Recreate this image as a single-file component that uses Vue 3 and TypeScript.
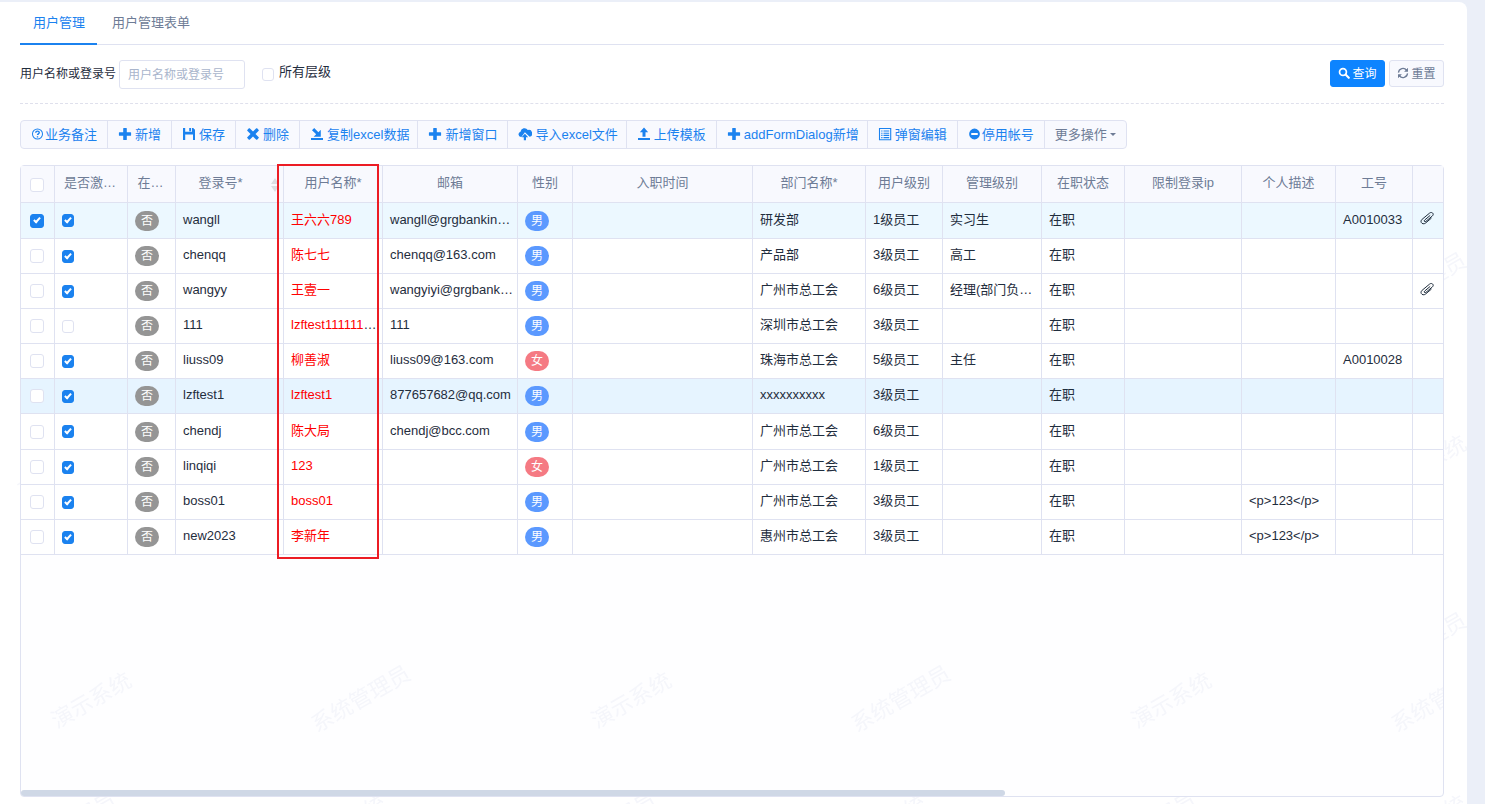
<script setup lang="ts">
import { ref } from 'vue'

interface Shape { d: string; kind: 'fill' | 'line' | 'thin' | 'cut' }
interface Tool { label: string; icon: string; slim?: boolean; tight?: boolean }
interface User {
  picked: boolean
  active: boolean
  login: string
  name: string
  cut?: boolean
  mail: string
  sex: '男' | '女'
  dept: string
  level: string
  manage: string
  note: string
  code: string
  clip: boolean
}

const icons: Record<string, Shape[]> = {
  help: [
    { kind: 'thin', d: 'M7 1.6a5.4 5.4 0 1 0 0 10.8a5.4 5.4 0 1 0 0-10.8z' },
    { kind: 'line', d: 'M5.1 5.7c0-2.4 3.8-2.3 3.8-.2c0 1.4-1.9 1.2-1.9 2.7M7 9.3v1.5' },
  ],
  plus: [{ kind: 'fill', d: 'M5.2 1.4q0-.5.5-.5h2.6q.5 0 .5.5v3.8h3.8q.5 0 .5.5v2.6q0 .5-.5.5H8.800v3.800q0 .5-.5.5H5.700q-.5 0-.5-.5V8.800H1.400q-.5 0-.5-.5V5.700q0-.5.5-.5h3.800z' }],
  save: [{ kind: 'fill', d: 'M1 1h2.200v4.300h6.800V1h1.200L13 2.800V13h-2V7.500H3.200V13H1zM7.200 1h1.900v3.200H7.200zM3.200 4.800h6.800v2.700H3.200z' }],
  remove: [{ kind: 'fill', d: 'M3.700 1.300L7 4.500l3.300-3.200q.4-.3.800 0l1.600 1.600q.3.400 0 .8L9.500 7l3.200 3.300q.3.400 0 .8l-1.600 1.600q-.4.300-.8 0L7 9.500l-3.300 3.200q-.4.300-.8 0l-1.600-1.600q-.3-.4 0-.8L4.500 7L1.300 3.700q-.3-.4 0-.8l1.600-1.600q.4-.3.800 0z' }],
  copy: [{ kind: 'fill', d: 'M1 11h12v2H1zM2 3.200L4.200 1l4.200 4.200L10.800 2.800V9.800H3.600L6.200 7.300z' }],
  cloud: [
    { kind: 'fill', d: 'M3 10a2.700 2.700 0 0 1-.5-5.300A4 4 0 0 1 9.800 3A3.400 3.400 0 0 1 11.600 9.800L6.900 5.200L3.400 9.900z' },
    { kind: 'fill', d: 'M6.900 6.800l3.300 3.400H8v3.100H5.800v-3.100H3.600z' },
  ],
  upload: [{ kind: 'fill', d: 'M1 11h12v2H1zM7 .6l4.200 4.600H8.500v4.600h-3V5.200H2.800z' }],
  list: [
    { kind: 'thin', d: 'M1.500 1.500h11.200v11.200H1.500z' },
    { kind: 'thin', d: 'M3.200 4h1.300M5.500 4h5.700M3.200 6.200h1.300M5.500 6.200h5.700M3.200 8.400h1.300M5.500 8.400h5.700M3.200 10.600h1.300M5.500 10.600h5.700' },
  ],
  minus: [
    { kind: 'fill', d: 'M7 1.200a5.800 5.800 0 1 0 0 11.600a5.800 5.800 0 1 0 0-11.600z' },
    { kind: 'cut', d: 'M3.500 6h7v2.200h-7z' },
  ],
}

const tabs = ['用户管理', '用户管理表单']
const tools: Tool[] = [
  { label: '业务备注', icon: 'help', slim: true },
  { label: '新增', icon: 'plus' },
  { label: '保存', icon: 'save' },
  { label: '删除', icon: 'remove' },
  { label: '复制excel数据', icon: 'copy', tight: true },
  { label: '新增窗口', icon: 'plus' },
  { label: '导入excel文件', icon: 'cloud', tight: true },
  { label: '上传模板', icon: 'upload' },
  { label: 'addFormDialog新增', icon: 'plus', tight: true },
  { label: '弹窗编辑', icon: 'list' },
  { label: '停用帐号', icon: 'minus', slim: true },
]
const headers = ['是否激…', '在…', '登录号*', '用户名称*', '邮箱', '性别', '入职时间', '部门名称*', '用户级别', '管理级别', '在职状态', '限制登录ip', '个人描述', '工号', '']

const gz = '广州市总工会'
const users = ref<User[]>([
  { picked: true, active: true, login: 'wangll', name: '王六六789', mail: 'wangll@grgbankin…', sex: '男', dept: '研发部', level: '1级员工', manage: '实习生', note: '', code: 'A0010033', clip: true },
  { picked: false, active: true, login: 'chenqq', name: '陈七七', mail: 'chenqq@163.com', sex: '男', dept: '产品部', level: '3级员工', manage: '高工', note: '', code: '', clip: false },
  { picked: false, active: true, login: 'wangyy', name: '王壹一', mail: 'wangyiyi@grgbank…', sex: '男', dept: gz, level: '6级员工', manage: '经理(部门负…', note: '', code: '', clip: true },
  { picked: false, active: false, login: '111', name: 'lzftest111111', cut: true, mail: '111', sex: '男', dept: '深圳市总工会', level: '3级员工', manage: '', note: '', code: '', clip: false },
  { picked: false, active: true, login: 'liuss09', name: '柳善淑', mail: 'liuss09@163.com', sex: '女', dept: '珠海市总工会', level: '5级员工', manage: '主任', note: '', code: 'A0010028', clip: false },
  { picked: false, active: true, login: 'lzftest1', name: 'lzftest1', mail: '877657682@qq.com', sex: '男', dept: 'xxxxxxxxxx', level: '3级员工', manage: '', note: '', code: '', clip: false },
  { picked: false, active: true, login: 'chendj', name: '陈大局', mail: 'chendj@bcc.com', sex: '男', dept: gz, level: '6级员工', manage: '', note: '', code: '', clip: false },
  { picked: false, active: true, login: 'linqiqi', name: '123', mail: '', sex: '女', dept: gz, level: '1级员工', manage: '', note: '', code: '', clip: false },
  { picked: false, active: true, login: 'boss01', name: 'boss01', mail: '', sex: '男', dept: gz, level: '3级员工', manage: '', note: '<p>123</p>', code: '', clip: false },
  { picked: false, active: true, login: 'new2023', name: '李新年', mail: '', sex: '男', dept: '惠州市总工会', level: '3级员工', manage: '', note: '<p>123</p>', code: '', clip: false },
])
const keyword = ref('')
const allLevels = ref(false)
const hovered = 5
</script>

<template>
  <main class="card">
    <svg class="mark" aria-hidden="true">
      <defs>
        <pattern id="page-mark" width="540" height="360" patternUnits="userSpaceOnUse">
          <text class="mark-text" transform="translate(293 318) rotate(-30)">系统管理员</text>
          <text class="mark-text" transform="translate(23 138) rotate(-30)">系统管理员</text>
          <text class="mark-text" transform="translate(42 310) rotate(-30)">演示系统</text>
          <text class="mark-text" transform="translate(312 130) rotate(-30)">演示系统</text>
        </pattern>
      </defs>
      <rect y="240" width="100%" height="100%" fill="url(#page-mark)" />
    </svg>

    <nav class="tabs">
      <a v-for="(t, i) in tabs" :key="t" href="#" class="tab" :class="{ on: i === 0 }">{{ t }}</a>
    </nav>

    <form class="search" @submit.prevent>
      <label class="search-label" for="kw">用户名称或登录号</label>
      <input id="kw" v-model="keyword" class="field" type="text" placeholder="用户名称或登录号" />
      <input id="all" v-model="allLevels" class="check search-check" type="checkbox" />
      <label class="all-label" for="all">所有层级</label>
      <div class="actions">
        <button class="btn primary" type="submit">
          <svg class="ico" viewBox="0 0 14 14" aria-hidden="true">
            <circle cx="5.800" cy="5.800" r="4" fill="none" stroke="currentColor" stroke-width="2" />
            <path d="M8.800 8.800L12.600 12.600" stroke="currentColor" stroke-width="2.400" stroke-linecap="round" />
          </svg>查询
        </button>
        <button class="btn" type="reset">
          <svg class="ico" viewBox="0 0 14 14" aria-hidden="true">
            <path d="M1.700 6.500A5.300 5.300 0 0 1 11.200 3.800M12.300 7.500A5.300 5.300 0 0 1 2.800 10.200" fill="none" stroke="currentColor" stroke-width="1.500" />
            <path d="M12.800 1v4.500H8.300zM1.200 13V8.500h4.500z" fill="currentColor" />
          </svg>重置
        </button>
      </div>
    </form>

    <div class="toolbar">
      <button v-for="t in tools" :key="t.label" type="button" class="tool" :class="{ tight: t.tight }">
        <svg class="tool-ico" :class="{ slim: t.slim }" viewBox="0 0 14 14" aria-hidden="true">
          <path v-for="(s, i) in icons[t.icon]" :key="i" :class="s.kind" :d="s.d" />
        </svg>{{ t.label }}
      </button>
      <button type="button" class="tool more">更多操作<i class="caret"></i></button>
    </div>

    <section class="grid">
      <svg class="mark" aria-hidden="true">
        <defs>
          <pattern id="grid-mark" y="389" width="540" height="240" patternUnits="userSpaceOnUse">
            <text class="mark-text" transform="translate(36 174) rotate(-30)">演示系统</text>
            <text class="mark-text" transform="translate(296 178) rotate(-30)">系统管理员</text>
          </pattern>
        </defs>
        <rect y="389" width="100%" height="240" fill="url(#grid-mark)" />
      </svg>
      <table>
        <colgroup>
          <col class="c34" /><col class="c73" /><col class="c48" /><col class="c108" /><col class="c99" />
          <col class="c135" /><col class="c55" /><col class="c180" /><col class="c113" /><col class="c77" />
          <col class="c99" /><col class="c83" /><col class="c117" /><col class="c94" /><col class="c77" /><col />
        </colgroup>
        <thead>
          <tr>
            <th class="pick"><input class="check big" type="checkbox" aria-label="全选" /></th>
            <th v-for="(h, i) in headers" :key="i" :class="{ sortable: i === 2, clipped: i < 2 }">
              {{ h }}
              <svg v-if="i === 2" class="sort" viewBox="0 0 8 14" aria-hidden="true">
                <path d="M4 0l4 6H0zM4 14l4-6H0z" fill="#dcdde2" />
              </svg>
            </th>
          </tr>
        </thead>
        <tbody>
          <tr v-for="(u, i) in users" :key="u.login" :class="{ picked: u.picked, hovered: i === hovered }">
            <td class="pick"><input v-model="u.picked" class="check big" type="checkbox" :aria-label="u.login" /></td>
            <td class="ctl"><input v-model="u.active" class="check" type="checkbox" aria-label="是否激活" /></td>
            <td class="ctl"><span class="tag">否</span></td>
            <td>{{ u.login }}</td>
            <td><span class="name">{{ u.name }}</span><template v-if="u.cut">…</template></td>
            <td>{{ u.mail }}</td>
            <td class="ctl"><span class="tag" :class="u.sex === '男' ? 'male' : 'female'">{{ u.sex }}</span></td>
            <td></td>
            <td>{{ u.dept }}</td>
            <td>{{ u.level }}</td>
            <td>{{ u.manage }}</td>
            <td>在职</td>
            <td></td>
            <td>{{ u.note }}</td>
            <td>{{ u.code }}</td>
            <td class="files">
              <svg v-if="u.clip" class="clip" viewBox="0 0 14 14" aria-hidden="true">
                <path d="M10.200 4.400L4.700 9c-1.200 1.100.1 2.300 1.200 1.400l6.500-5.500c2.200-2-.6-4.600-2.800-2.800L2.100 8.300c-2.900 2.600.6 6.100 3.500 3.700l5.900-5" />
              </svg>
            </td>
          </tr>
        </tbody>
      </table>
      <div class="thumb"></div>
      <div class="frame"></div>
    </section>
  </main>
</template>

<style>
body {
  margin: 0;
  background: #ebeff8;
}
</style>

<style scoped>
.card {
  position: relative;
  box-sizing: border-box;
  display: flex;
  flex-direction: column;
  min-height: calc(100vh - 2px);
  margin: 2px 18px 0 0;
  padding: 0 23px 7px 20px;
  border-top-right-radius: 8px;
  background: #fff;
  overflow: hidden;
  font: 13px/20px "Liberation Sans", "Noto Sans CJK SC", sans-serif;
  color: #1f2d3d;
}
button, input {
  font-family: inherit;
  margin: 0;
}
.mark {
  position: absolute;
  inset: 0;
  width: 100%;
  height: 100%;
  pointer-events: none;
}
.mark-text {
  font-size: 22px;
  fill: #f5f6fb;
}
.tabs {
  position: relative;
  display: flex;
  gap: 2px;
  height: 42px;
  border-bottom: 1px solid #dfe2f1;
}
.tab {
  box-sizing: border-box;
  height: 43px;
  padding: 11px 12px 0 13px;
  color: #6e7c96;
  text-decoration: none;
}
.tab.on {
  color: #1b82ef;
  border-bottom: 2px solid #1b82ef;
}
.search {
  position: relative;
  display: flex;
  align-items: flex-start;
  height: 43px;
  padding-top: 15px;
  border-bottom: 1px dashed #dfe0ec;
}
.search-label {
  width: 99px;
  font-size: 12px;
  line-height: 28px;
  white-space: nowrap;
}
.field {
  box-sizing: border-box;
  width: 126px;
  height: 29px;
  padding: 0 8px;
  border: 1px solid #dfe2f1;
  border-radius: 3px;
  background: #fff;
  font-size: 12px;
  color: #1f2d3d;
  outline: none;
}
.field::placeholder {
  color: #a9b5cc;
  opacity: 1;
}
.check {
  appearance: none;
  display: block;
  flex: none;
  box-sizing: border-box;
  width: 12px;
  height: 13px;
  border: 1px solid #dfe2f1;
  border-radius: 3px;
  background: #fff;
}
.check.big {
  width: 14px;
  height: 14px;
}
.check:checked {
  border-color: #1b82ef;
  background: #1b82ef;
}
.check:checked::after {
  content: "";
  display: block;
  box-sizing: border-box;
  width: 4px;
  height: 7px;
  margin: 1px auto 0;
  border: solid #fff;
  border-width: 0 2px 2px 0;
  transform: rotate(42deg);
}
.search-check {
  margin: 8px 5px 0 17px;
}
.all-label {
  line-height: 24px;
}
.actions {
  display: flex;
  gap: 4px;
  margin-left: auto;
}
.btn {
  box-sizing: border-box;
  display: flex;
  align-items: center;
  justify-content: center;
  gap: 2px;
  width: 55px;
  height: 27px;
  padding: 0 0 2px;
  border: 1px solid #dfe2f1;
  border-radius: 3px;
  background: #f8f9fe;
  font-size: 12px;
  color: #6e7c96;
  white-space: nowrap;
}
.btn.primary {
  border-color: #0d84ff;
  background: #0d84ff;
  color: #fff;
}
.ico {
  width: 12px;
  height: 12px;
}
.toolbar {
  position: relative;
  display: flex;
  align-self: flex-start;
  margin-top: 16px;
  border: 1px solid #dfe2f1;
  border-radius: 4px;
  background: #f8f9fe;
  overflow: hidden;
}
.tool {
  display: flex;
  align-items: center;
  height: 27px;
  padding: 0 10px 2px;
  border: 0;
  border-right: 1px solid #dfe2f1;
  background: none;
  font-size: 13px;
  color: #1b82ef;
  white-space: nowrap;
}
.tool.tight {
  padding-right: 8px;
}
.tool.more {
  border-right: 0;
  color: #6e7c96;
}
.tool-ico {
  width: 14px;
  height: 14px;
  margin-right: 3px;
}
.tool-ico.slim {
  width: 13px;
  margin-right: 1px;
}
.fill {
  fill: currentColor;
}
.line, .thin {
  fill: none;
  stroke: currentColor;
  stroke-width: 1.500;
}
.thin {
  stroke-width: 1.100;
}
.cut {
  fill: #fff;
}
.caret {
  margin: 2px 0 0 3px;
  border: solid transparent;
  border-width: 3px 3px 0;
  border-top-color: #6e7c96;
}
.grid {
  position: relative;
  flex: 1;
  min-height: 420px;
  margin-top: 16px;
  border: 1px solid #dfe2f1;
  border-radius: 4px;
  background: #fefeff;
}
table {
  position: relative;
  width: 100%;
  table-layout: fixed;
  border-spacing: 0;
}
.c34 { width: 34px; }
.c48 { width: 48px; }
.c55 { width: 55px; }
.c73 { width: 73px; }
.c77 { width: 77px; }
.c83 { width: 83px; }
.c94 { width: 94px; }
.c99 { width: 99px; }
.c108 { width: 108px; }
.c113 { width: 113px; }
.c117 { width: 117px; }
.c135 { width: 135px; }
.c180 { width: 180px; }
th, td {
  box-sizing: border-box;
  height: 35px;
  padding: 0 0 2px 7px;
  border-right: 1px solid #dfe2f1;
  border-bottom: 1px solid #dfe2f1;
  text-align: left;
  white-space: nowrap;
  overflow: hidden;
}
th:last-child, td:last-child {
  border-right: 0;
}
th {
  position: relative;
  height: 37px;
  padding: 0 0 2px;
  background: #f8f9fe;
  font-weight: 400;
  color: #6e7c96;
  text-align: center;
}
th.clipped {
  padding-right: 2px;
}
th.sortable {
  padding-right: 18px;
}
.sort {
  position: absolute;
  right: 4px;
  top: 12px;
  width: 8px;
  height: 14px;
}
td {
  background: #fff;
}
tbody tr:nth-child(6n + 1) td {
  height: 36px;
}
.picked td {
  background: #ecf8ff;
}
.hovered td {
  background: #e6f4ff;
}
th.pick {
  padding: 1px 0 0 9px;
}
td.pick {
  padding: 0 0 0 9px;
}
td.ctl {
  padding: 0 0 0 7px;
}
td.files {
  padding: 0 0 5px 7px;
}
.tag {
  display: block;
  width: 24px;
  height: 20px;
  border-radius: 10px;
  background: #959595;
  font-size: 12px;
  color: #fff;
  text-align: center;
}
.male {
  background: #5b99ff;
}
.female {
  background: #f57a83;
}
.name {
  color: #f00;
}
.clip {
  display: block;
  width: 14px;
  height: 14px;
  fill: none;
  stroke: #1f2d3d;
  stroke-width: 1;
}
.thumb {
  position: absolute;
  left: 0;
  bottom: 0;
  width: 69.200%;
  height: 6px;
  border-radius: 3px;
  background: #cfd8e6;
}
.frame {
  position: absolute;
  left: 256px;
  top: -2px;
  box-sizing: border-box;
  width: 102px;
  height: 395px;
  border: 2px solid #ec1c24;
  pointer-events: none;
}
</style>
